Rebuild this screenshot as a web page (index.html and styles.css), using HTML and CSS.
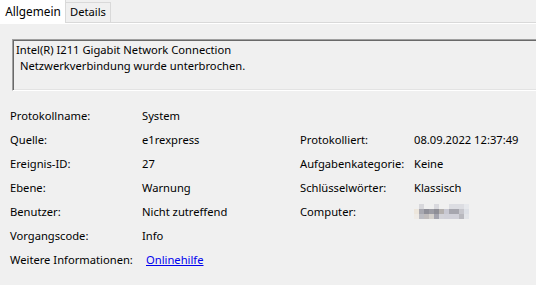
FILE: index.html
```html
<!DOCTYPE html>
<html lang="de">
<head>
    <meta charset="UTF-8">
    <title>Ereigniseigenschaften</title>
    <link rel="stylesheet" href="styles.css">
</head>
<body>
    <!-- Tabs -->
    <div class="tabs">
        <div class="tab active">Allgemein</div>
        <div class="tab">Details</div>
    </div>

    <div class="panel">
        <!-- Event message -->
        <div class="message">
            <p>Intel(R) I211 Gigabit Network Connection</p>
            <p class="indent">Netzwerkverbindung wurde unterbrochen.</p>
        </div>

        <!-- Event properties -->
        <div class="fields">
            <span>Protokollname:</span><span>System</span><span></span><span></span>
            <span>Quelle:</span><span>e1rexpress</span><span>Protokolliert:</span><span>08.09.2022 12:37:49</span>
            <span>Ereignis-ID:</span><span>27</span><span>Aufgabenkategorie:</span><span>Keine</span>
            <span>Ebene:</span><span>Warnung</span><span>Schlüsselwörter:</span><span>Klassisch</span>
            <span>Benutzer:</span><span>Nicht zutreffend</span><span>Computer:</span>
            <span>
                <svg class="blurred" width="56" height="15" viewBox="0 0 56 15">
                    <rect x="0" y="0" width="5" height="5" fill="#f0f0f0"/>
                    <rect x="5" y="0" width="5" height="5" fill="#d8d8dc"/>
                    <rect x="20" y="0" width="5" height="5" fill="#d9d9de"/>
                    <rect x="35" y="0" width="15" height="5" fill="#dcdde2"/>
                    <rect x="50" y="0" width="5" height="5" fill="#e6e8ec"/>
                    <rect x="0" y="5" width="5" height="5" fill="#ede6dc"/>
                    <rect x="5" y="5" width="5" height="5" fill="#a8a8b0"/>
                    <rect x="10" y="5" width="5" height="5" fill="#8f8f98"/>
                    <rect x="15" y="5" width="5" height="5" fill="#9c9ca4"/>
                    <rect x="20" y="5" width="5" height="5" fill="#8e8e96"/>
                    <rect x="25" y="5" width="5" height="5" fill="#b4b0ae"/>
                    <rect x="30" y="5" width="5" height="5" fill="#c8c8d2"/>
                    <rect x="35" y="5" width="10" height="5" fill="#a6a6ae"/>
                    <rect x="45" y="5" width="5" height="5" fill="#c6c6cc"/>
                    <rect x="50" y="5" width="5" height="5" fill="#dde0e6"/>
                    <rect x="0" y="10" width="5" height="5" fill="#efebe6"/>
                    <rect x="5" y="10" width="5" height="5" fill="#bcbcc2"/>
                    <rect x="10" y="10" width="5" height="5" fill="#c0bcbc"/>
                    <rect x="15" y="10" width="5" height="5" fill="#d4d0cc"/>
                    <rect x="20" y="10" width="5" height="5" fill="#a4a4ae"/>
                    <rect x="25" y="10" width="5" height="5" fill="#d2d2d8"/>
                    <rect x="30" y="10" width="15" height="5" fill="#d0d0d8"/>
                    <rect x="45" y="10" width="5" height="5" fill="#b8b8be"/>
                    <rect x="50" y="10" width="5" height="5" fill="#e2e4e8"/>
                </svg>
            </span>
            <span>Vorgangscode:</span><span>Info</span><span></span><span></span>
            <span>Weitere Informationen:</span><span><a href="#" class="link">Onlinehilfe</a></span><span></span><span></span>
        </div>
    </div>
</body>
</html>
```

FILE: styles.css
```css
* {
    margin: 0;
    padding: 0;
    box-sizing: border-box;
}

body {
    font-family: "Noto Sans", sans-serif;
    font-size: 11.2px;
    color: #000;
    background-color: #f0f0f0;
    overflow: hidden;
}

/* Tabs */
.tabs {
    display: flex;
    align-items: flex-end;
    height: 23px;
    border-bottom: 1px solid #d9d9d9;
}

.tab {
    width: 45px;
    height: 20px;
    text-align: center;
    line-height: 18px;
    border: 1px solid #d9d9d9;
    border-bottom: none;
    border-left: none;
}

.tab.active {
    width: 66px;
    height: 23px;
    margin-bottom: -1px;
    padding-left: 1px;
    line-height: 22px;
    font-size: 11.8px;
    background-color: #fff;
    border-top: none;
}

/* Panel */
.panel {
    border-top: 1px solid #fff;
    padding: 15px 0 0 12px;
    overflow: hidden;
}

.message {
    height: 52px;
    margin-right: -20px;
    padding: 2px 3px;
    line-height: 16px;
    border-top: 1px solid #a0a0a0;
    border-left: 1px solid #a0a0a0;
    border-bottom: 1px solid #fff;
    box-shadow: inset 1px 1px #696969, inset 0 -1px #e3e3e3;
}

.message .indent {
    padding-left: 4px;
}

/* Properties grid */
.fields {
    display: grid;
    grid-template-columns: 132px 158px 114px auto;
    grid-auto-rows: 24px;
    align-items: center;
    margin-top: 12px;
    margin-left: -2px;
}

.blurred {
    display: block;
}

.link {
    color: #0000ee;
    margin-left: 4px;
}
```
